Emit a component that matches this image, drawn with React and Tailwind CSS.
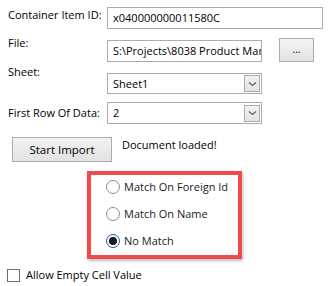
import React from 'react';

// Small chevron used inside the combo boxes
const Chevron = () => (
    <svg width="9" height="6" viewBox="0 0 9 6" fill="none">
        <path d="M1 1.5 L4.5 4.5 L8 1.5" stroke="#606060" strokeWidth="1.3" />
    </svg>
);

const TextBox = ({ value, className = '' }) => (
    <div className={`flex items-center border border-[#abadb3] bg-white pl-[5px] overflow-hidden whitespace-nowrap ${className}`}>
        {value}
    </div>
);

const ComboBox = ({ value, className = '' }) => (
    <div className={`flex items-center justify-between border border-[#acacac] bg-white pl-[5px] pr-[1px] ${className}`}>
        <span>{value}</span>
        <div className="flex h-[17px] w-[16px] items-center justify-center border border-[#acacac] bg-gradient-to-b from-[#f2f2f2] to-[#e3e3e3]">
            <Chevron />
        </div>
    </div>
);

const Radio = ({ label, checked }) => (
    <div className="flex h-[16px] items-center">
        {checked ? (
            <div className="flex h-[14px] w-[14px] shrink-0 items-center justify-center rounded-full border border-[#1c5da8] bg-white">
                <div className="h-[8px] w-[8px] rounded-full bg-[#1b1b1b]"></div>
            </div>
        ) : (
            <div className="h-[14px] w-[14px] shrink-0 rounded-full border border-[#8c8c8c] bg-white"></div>
        )}
        <span className="ml-[4px] whitespace-nowrap text-[#1a1a1a]">{label}</span>
    </div>
);

export default function App() {
    return (
        <div
            className="h-[286px] w-[336px] overflow-hidden bg-white text-[11px] leading-[16px] text-black"
            style={{ fontFamily: '"Open Sans", "Noto Sans", sans-serif' }}
        >
            {/* Container Item ID */}
            <div className="flex items-start pt-[7px]">
                <div className="w-[107px] shrink-0 whitespace-nowrap pl-[8px]">Container Item ID:</div>
                <TextBox value="x040000000011580C" className="h-[22px] w-[216px]" />
            </div>

            {/* File */}
            <div className="mt-[6px] flex items-start">
                <div className="w-[107px] shrink-0 whitespace-nowrap pl-[8px]">File:</div>
                <TextBox value="S:\Projects\8038 Product Management" className="mt-[5px] h-[22px] w-[155px] shrink-0" />
                <button className="ml-[17px] mt-[3px] flex h-[24px] w-[35px] shrink-0 items-center justify-center border border-[#acacac] bg-gradient-to-b from-[#f3f3f3] to-[#e3e3e3] pb-[3px] text-[10px] leading-[10px]">
                    ...
                </button>
            </div>

            {/* Sheet */}
            <div className="mt-[2px] flex items-start">
                <div className="w-[107px] shrink-0 whitespace-nowrap pl-[8px]">Sheet:</div>
                <ComboBox value="Sheet1" className="mt-[9px] h-[21px] w-[155px]" />
            </div>

            {/* First row */}
            <div className="mt-[8px] flex items-start">
                <div className="mt-[3px] w-[107px] shrink-0 whitespace-nowrap pl-[8px]">First Row Of Data:</div>
                <ComboBox value="2" className="h-[22px] w-[155px]" />
            </div>

            {/* Import */}
            <div className="mt-[13px] flex items-start">
                <button className="ml-[12px] h-[25px] w-[100px] border border-[#acacac] bg-gradient-to-b from-[#f2f2f2] to-[#e2e2e2] text-[11.5px]">
                    Start Import
                </button>
                <div className="ml-[10px] whitespace-nowrap">Document loaded!</div>
            </div>

            {/* Match options */}
            <div className="ml-[87px] mt-[9px] flex h-[88px] w-[155px] flex-col gap-[11px] border-[4px] border-[#f04a4a] pl-[15px] pt-[4px] shadow-[1px_2px_3px_rgba(0,0,0,0.25)]">
                <Radio label="Match On Foreign Id" />
                <Radio label="Match On Name" />
                <Radio label="No Match" checked />
            </div>

            {/* Allow empty */}
            <div className="ml-[7px] mt-[8px] flex items-center">
                <div className="h-[13px] w-[13px] border border-[#6f6f6f] bg-white"></div>
                <span className="ml-[6px] whitespace-nowrap">Allow Empty Cell Value</span>
            </div>
        </div>
    );
}
